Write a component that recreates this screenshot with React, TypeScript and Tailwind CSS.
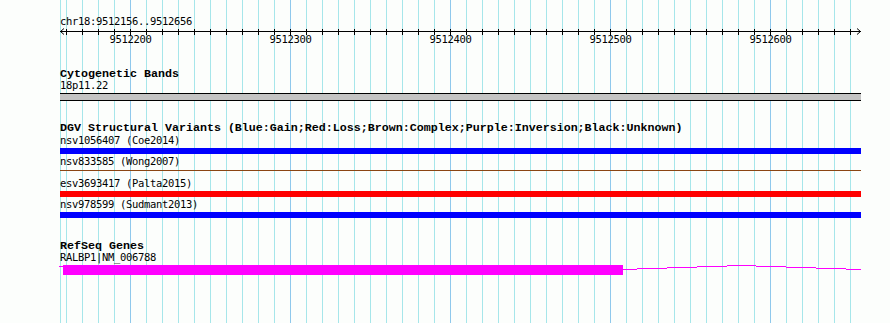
const START = 9512156;
const END = 9512656;
const PX_PER_BP = 1.6;
const TRACK_W = 802;

const gridXs: number[] = [];
for (let x = 66; x <= 850; x += 16) gridXs.push(x);
const majorXs = [130, 290, 450, 610, 770];

const variants = [
  { id: "nsv1056407 (Coe2014)", kind: "bar", color: "bg-[#0000ff]" },
  { id: "nsv833585 (Wong2007)", kind: "line", color: "bg-[#8b4513]" },
  { id: "esv3693417 (Palta2015)", kind: "bar", color: "bg-[#ff0000]" },
  { id: "nsv978599 (Sudmant2013)", kind: "bar", color: "bg-[#0000ff]" },
];

// intron hat to an exon past the right edge: [x1, x2, y]
const intron: [number, number, number][] = [
  [563, 577, 5.5],
  [577, 607, 4.5],
  [607, 637, 3.5],
  [637, 667, 2.5],
  [667, 696, 1.5],
  [696, 726, 2.5],
  [726, 756, 3.5],
  [756, 786, 4.5],
  [786, 801, 5.5],
];

const mono = "font-['DejaVu_Sans_Mono',monospace] text-[10.5px] tracking-[-0.32px] leading-[13px] h-[13px] text-black whitespace-nowrap";
const bold = "font-['Liberation_Mono',monospace] font-bold text-[11.66px] leading-[11px] h-[10px] text-black whitespace-nowrap";

const Grid = () => (
  <svg className="absolute inset-0" width={890} height={323} shapeRendering="crispEdges">
    <line x1={60.5} x2={60.5} y1={0} y2={323} stroke="#a6e6ea" />
    {gridXs.map((x) => (
      <line
        key={x}
        x1={x + 0.5}
        x2={x + 0.5}
        y1={0}
        y2={323}
        stroke={majorXs.includes(x) ? "#8fc8ec" : "#a6e6ea"}
      />
    ))}
  </svg>
);

const Ruler = () => {
  const labels = [9512200, 9512300, 9512400, 9512500, 9512600];
  return (
    <svg className="block" width={TRACK_W + 4} height={19} shapeRendering="crispEdges">
      <line x1={0} x2={801} y1={3.5} y2={3.5} stroke="#000" />
      <polyline points="4,0.5 0.5,3.5 4,6.5" fill="none" stroke="#000" shapeRendering="auto" />
      <polyline points="797,0.5 800.5,3.5 797,6.5" fill="none" stroke="#000" shapeRendering="auto" />
      {gridXs.map((x) => (
        <line key={x} x1={x - 60 + 0.5} x2={x - 60 + 0.5} y1={1} y2={7} stroke="#000" />
      ))}
      {labels.map((bp) => (
        <text
          key={bp}
          x={(bp - START) * PX_PER_BP}
          y={15}
          textAnchor="middle"
          className="fill-black font-['DejaVu_Sans_Mono',monospace] text-[10.5px] tracking-[-0.32px]"
        >
          {bp}
        </text>
      ))}
    </svg>
  );
};

const GeneGlyph = () => (
  <svg className="block -ml-px" width={TRACK_W + 1} height={12} shapeRendering="crispEdges">
    <g transform="translate(1,0)">
      <line x1={-1} x2={3} y1={2.5} y2={2.5} stroke="#ff00ff" />
      <rect x={3} y={1} width={560} height={10} fill="#ff00ff" />
      {intron.map(([x1, x2, y]) => (
        <line key={x1} x1={x1} x2={x2} y1={y} y2={y} stroke="#ff00ff" />
      ))}
    </g>
  </svg>
);

export default function App() {
  return (
    <div className="relative w-[890px] h-[323px] overflow-hidden bg-[#fcfefc]">
      <Grid />
      <div className="relative pl-[60px]">
        <div className={`${mono} mt-[15px]`}>
          chr18:{START}..{END}
        </div>
        <Ruler />

        <div className={`${bold} mt-[22px]`}>Cytogenetic Bands</div>
        <div className={mono}>18p11.22</div>
        <div className="mt-[1px] h-[8px] w-[801px] border-y border-black bg-[#c4c4c4]" />

        <div className={`${bold} mt-[22px]`}>
          DGV Structural Variants (Blue:Gain;Red:Loss;Brown:Complex;Purple:Inversion;Black:Unknown)
        </div>
        <div className="mt-[1px] flex flex-col gap-[1px]">
          {variants.map((v) => (
            <div key={v.id}>
              <div className={mono}>{v.id}</div>
              <div className="mt-[1px] h-[6px] w-[801px]">
                {v.kind === "bar" ? (
                  <div className={`h-[6px] w-full ${v.color}`} />
                ) : (
                  <div className={`mt-[2px] h-px w-full ${v.color}`} />
                )}
              </div>
            </div>
          ))}
        </div>

        <div className={`${bold} mt-[23px]`}>RefSeq Genes</div>
        <div className={mono}>RALBP1|NM_006788</div>
        <GeneGlyph />
      </div>
    </div>
  );
}
